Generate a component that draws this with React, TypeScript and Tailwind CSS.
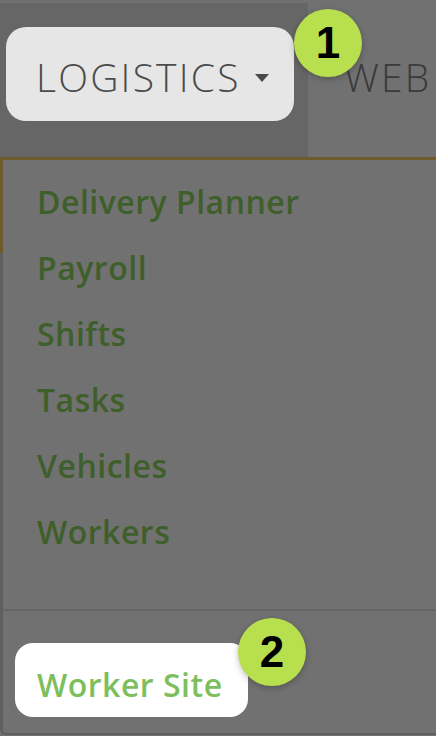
import React from "react";

const items = ["Delivery Planner", "Payroll", "Shifts", "Tasks", "Vehicles", "Workers"];

function Badge({ n }: { n: string }) {
  return (
    <div
      className="flex h-[68px] w-[68px] items-center justify-center rounded-full bg-[#b8e04e] text-[44px] font-bold leading-none text-black shadow-[0_2px_6px_rgba(0,0,0,0.25)]"
      style={{ fontFamily: '"Liberation Sans", Arial, sans-serif' }}
    >
      {n}
    </div>
  );
}

export default function App() {
  return (
    <div
      className="relative h-[736px] w-[436px] overflow-hidden bg-[#717171]"
      style={{ fontFamily: '"Open Sans", "Noto Sans", sans-serif' }}
    >
      {/* top nav */}
      <div className="flex pt-[3px]">
        <div className="relative h-[154px] w-[308px] shrink-0 bg-[#666666] pl-[6px] pt-[24px]">
          <div className="flex h-[94px] w-[288px] items-center rounded-[20px] bg-[#e6e6e6] pl-[30px] pt-[6px]">
            <span className="text-[39px] font-light tracking-[2.2px] text-[#4b4b4b]">LOGISTICS</span>
            <svg className="ml-[14px] mt-[2px]" width="14" height="8" viewBox="0 0 14 8">
              <path d="M0 0 L14 0 L7 8 Z" fill="#4b4b4b" />
            </svg>
          </div>
          <div className="absolute left-[294px] top-[6px] z-10">
            <Badge n="1" />
          </div>
        </div>
        <div className="flex h-[154px] items-start pl-[36px] pt-[24px]">
          <div className="flex h-[94px] items-center pt-[6px]">
            <span className="text-[39px] font-light tracking-[2.2px] text-[#3a3a3a]">WEB</span>
          </div>
        </div>
      </div>

      {/* dropdown panel */}
      <div className="relative h-[578px] rounded-bl-[6px] border-b-[2px] border-l-[3px] border-t-[3px] border-b-[#5f5f5f] border-l-[#5f5f5f] border-t-[#6e5b2b]">
        <div className="absolute left-[-3px] top-[-3px] h-[96px] w-[3px] bg-[#6e5b2b]" />
        <div className="flex flex-col pl-[34px] pt-[9px]">
          {items.map((t) => (
            <div key={t} className="flex h-[66px] items-center text-[32px] font-semibold tracking-[0.5px] text-[#3f5f2a]">
              {t}
            </div>
          ))}
        </div>
        <div className="mt-[44px] h-[2px] bg-[#666666]" />
        <div className="relative pl-[12px] pt-[32px]">
          <div className="flex h-[74px] w-[233px] items-center rounded-[18px] bg-white pl-[22px] pt-[10px] text-[32px] font-semibold tracking-[0.5px] text-[#7dbf5c]">
            Worker Site
          </div>
          <div className="absolute left-[235px] top-[7px] z-10">
            <Badge n="2" />
          </div>
        </div>
      </div>
    </div>
  );
}
